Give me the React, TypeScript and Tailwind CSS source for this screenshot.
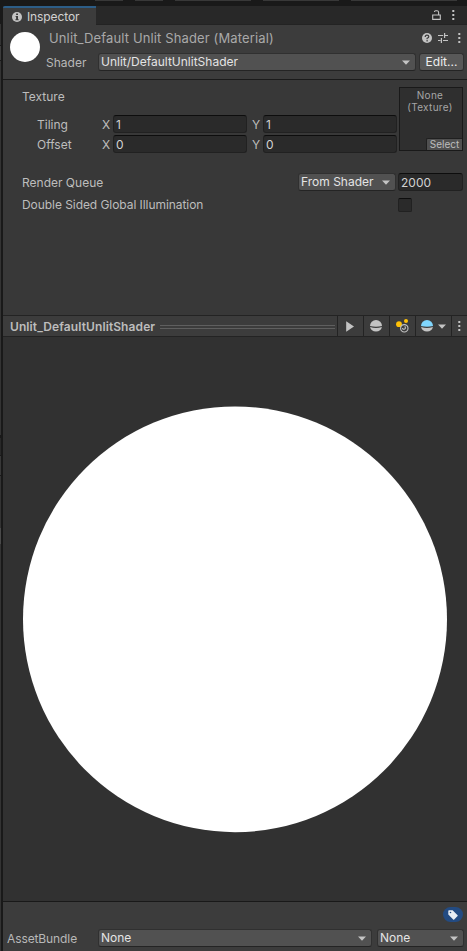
import type { ReactNode } from "react";

function Arrow() {
  return (
    <svg width="8" height="5" viewBox="0 0 8 5" className="shrink-0">
      <path d="M0 0.4H8L4 4.8Z" fill="#c4c4c4" />
    </svg>
  );
}

function Dots() {
  return (
    <svg width="3" height="10" viewBox="0 0 3 10" className="shrink-0">
      <path d="M0.3 0h2v2h-2zM0.3 4h2v2h-2zM0.3 8h2v2h-2z" fill="#c4c4c4" />
    </svg>
  );
}

function Popup({ children, className }: { children: ReactNode; className: string }) {
  return (
    <div
      className={`flex h-[18px] shrink-0 items-center justify-between rounded-[3px] border border-[#303030] border-b-[#242424] bg-[#515151] pr-[5px] pl-[2px] text-[#e4e4e4] ${className}`}
    >
      <span>{children}</span>
      <Arrow />
    </div>
  );
}

function Field({ children, className }: { children: ReactNode; className: string }) {
  return (
    <div
      className={`flex h-[18px] shrink-0 items-center rounded-[3px] border border-[#212121] border-t-[#0d0d0d] bg-[#2a2a2a] pt-[2px] pl-[2px] text-[#d2d2d2] ${className}`}
    >
      {children}
    </div>
  );
}

function VectorRow({ label, value }: { label: string; value: string }) {
  return (
    <div className="flex h-[18px] items-center">
      <span className="w-[65px] shrink-0 pt-[2px]">{label}</span>
      <span className="w-[11px] shrink-0 pt-[2px]">X</span>
      <Field className="w-[134px]">{value}</Field>
      <span className="ml-[5px] w-[11px] shrink-0 pt-[2px]">Y</span>
      <Field className="w-[134px]">{value}</Field>
    </div>
  );
}

function TopStrip() {
  return (
    <div className="flex h-[6px] bg-[#191919]">
      <div className="ml-[95px] h-px w-[28px] bg-[#383838]" />
      <div className="ml-[12px] h-px w-[28px] bg-[#383838]" />
      <div className="ml-[12px] h-px w-[76px] bg-[#383838]" />
      <div className="ml-[12px] h-px w-[76px] bg-[#383838]" />
      <div className="ml-[12px] h-px w-[106px] bg-[#383838]" />
    </div>
  );
}

function NeighbourEdge() {
  return (
    <div className="flex w-[3px] flex-col">
      <div className="mt-[18px] h-[21px] w-px bg-[#333333]" />
      <div className="mt-px h-[14px] w-px bg-[#3c3c3c]" />
      <div className="mt-px h-[374px] w-px bg-[#333333]" />
      <div className="mt-[3px] h-[17px] w-px bg-[#282828]" />
      <div className="mt-px h-[19px] w-px bg-[#383838]" />
      <div className="mt-px h-[52px] w-px bg-[#333333]" />
      <div className="h-[16px] w-px bg-[#4a4a4a]" />
      <div className="w-px flex-1 bg-[#333333]" />
    </div>
  );
}

function TabBar() {
  return (
    <div className="flex h-[19px] bg-[#282828]">
      <div className="flex w-[93px] items-center rounded-tl-[2px] border-t-2 border-[#2c5d87] bg-[#3c3c3c] pl-[9px] text-[#d2d2d2]">
        <svg width="10" height="10" viewBox="0 0 10 10">
          <circle cx="5" cy="5" r="5" fill="#c4c4c4" />
          <path d="M4.1 1.5h1.9v1.6H4.1zM3.6 4H6v3.3h.7v1H3.4v-1h.7V5h-.5z" fill="#3c3c3c" />
        </svg>
        <span className="ml-[5px] tracking-[-0.1px]">Inspector</span>
      </div>
      <div className="flex flex-1 items-center justify-end border-b border-[#232323] pr-[12px]">
        <svg width="9" height="10" viewBox="0 0 9 10" className="mr-[11px]">
          <path d="M0.7 5h7.6v4.4H0.7zM6.6 5V2.2Q6.6 .7 5 .7H3.6Q2.5 .7 2.4 2" fill="none" stroke="#c4c4c4" strokeWidth="1.1" />
        </svg>
        <Dots />
      </div>
    </div>
  );
}

function Header() {
  return (
    <div className="flex h-[55px] border-b border-[#1a1a1a] bg-[#3c3c3c]">
      <div className="mt-[7px] ml-[7px] h-[30px] w-[30px] shrink-0 rounded-full bg-white" />
      <div className="flex flex-1 flex-col">
        <div className="mt-[4px] flex h-[18px] items-center pr-[7px] pl-[9px]">
          <span className="flex-1 text-[13px] tracking-[0.13px] text-[#a9a9a9]">Unlit_Default Unlit Shader (Material)</span>
          <svg width="10" height="10" viewBox="0 0 10 10">
            <circle cx="5" cy="5" r="5" fill="#c4c4c4" />
            <path d="M3.2 3.9Q3.2 2.2 5 2.2T6.8 3.7Q6.8 4.6 5.1 5.3V6.3M5.1 7.1V8.4" fill="none" stroke="#3c3c3c" strokeWidth="1.2" />
          </svg>
          <svg width="10" height="10" viewBox="0 0 10 10" className="mr-[10px] ml-[6px]">
            <path d="M0 2.5h5.2M7 2.5h3M0 7.5h2.5M5 7.5h5M6.6 0v5M3.4 5v5" fill="none" stroke="#c4c4c4" strokeWidth="1.2" />
          </svg>
          <Dots />
        </div>
        <div className="mt-[6px] flex h-[18px] items-center pr-[4px] pl-[6px]">
          <span className="mt-[2px] w-[52px] text-[#b8b8b8]">Shader</span>
          <Popup className="w-[318px]">Unlit/DefaultUnlitShader</Popup>
          <div className="ml-[3px] flex h-[18px] w-[45px] items-center justify-center rounded-[3px] border border-[#303030] border-b-[#242424] bg-[#585858] text-[#eeeeee]">
            Edit...
          </div>
        </div>
      </div>
    </div>
  );
}

function Properties() {
  return (
    <div className="flex h-[235px] flex-col bg-[#383838] pr-[4px] pl-[19px] text-[#bdbdbd]">
      <div className="mt-[7px] flex h-[66px]">
        <div className="flex w-[377px] flex-col">
          <span className="mt-[1px] h-[18px] leading-[18px]">Texture</span>
          <div className="mt-[9px] flex flex-col gap-[2px] pl-[15px]">
            <VectorRow label="Tiling" value="1" />
            <VectorRow label="Offset" value="0" />
          </div>
        </div>
        <div className="flex h-[64px] w-[64px] shrink-0 flex-col justify-between border border-[#191919] bg-[#2f2f2f] text-[10px]">
          <div className="pt-[1px] pr-[2px] text-center leading-[12px] tracking-[0.3px] text-[#a6a6a6]">
            None
            <br />
            (Texture)
          </div>
          <div className="h-[12px] w-[36px] self-end rounded-tl-[2px] border-t border-l border-[#202020] bg-[#505050] text-center leading-[11px] text-[#bdbdbd]">
            Select
          </div>
        </div>
      </div>
      <div className="mt-[20px] flex h-[18px] items-center">
        <span className="flex-1 pt-[1px]">Render Queue</span>
        <Popup className="w-[98px]">From Shader</Popup>
        <Field className="ml-[2px] w-[65px]">2000</Field>
      </div>
      <div className="mt-[7px] flex h-[14px] items-center">
        <span className="w-[376px] tracking-[-0.06px]">Double Sided Global Illumination</span>
        <div className="h-[14px] w-[14px] rounded-[2px] border border-[#212121] border-t-[#0d0d0d] bg-[#2a2a2a]" />
      </div>
    </div>
  );
}

function Tool({ children, className }: { children: ReactNode; className: string }) {
  return <div className={`flex h-full shrink-0 items-center justify-center border-l border-[#232323] ${className}`}>{children}</div>;
}

function Ball({ top }: { top: string }) {
  return (
    <svg width="12" height="12" viewBox="0 0 12 12">
      <path d="M0 6A6 6 0 0 1 12 6Q6 7.6 0 6Z" fill={top} />
      <path d="M0.1 7.1Q6 8.9 11.9 7.1A6 5.4 0 0 1 .1 7.1Z" fill="#c4c4c4" />
    </svg>
  );
}

function PreviewBar() {
  return (
    <div className="flex h-[22px] items-center border-y border-[#232323] bg-[#3c3c3c]">
      <span className="ml-[7px] w-[150px] shrink-0 pt-[2px] font-semibold tracking-[0.1px] text-[#bdbdbd]">Unlit_DefaultUnlitShader</span>
      <div className="mt-[2px] mr-[2px] h-[4px] flex-1 border-y border-[#5f5f5f]" />
      <Tool className="w-[26px] pr-[1px]">
        <svg width="8" height="11" viewBox="0 0 8 11">
          <path d="M0.2 0.3L8 5.5L0.2 10.7Z" fill="#c4c4c4" />
        </svg>
      </Tool>
      <Tool className="w-[26px] pr-[1px]">
        <Ball top="#c4c4c4" />
      </Tool>
      <Tool className="w-[26px]">
        <svg width="13" height="14" viewBox="0 0 13 14">
          <circle cx="3" cy="5.2" r="2.9" fill="#ffc107" />
          <circle cx="10" cy="2" r="2" fill="#ffc107" />
          <circle cx="8.3" cy="9.3" r="3.7" fill="none" stroke="#c4c4c4" strokeWidth="1.1" />
          <path d="M8.8 7.2Q10.4 9.6 8 10.3Q6.5 10.3 6.6 9" fill="none" stroke="#c4c4c4" strokeWidth="1.1" />
        </svg>
      </Tool>
      <Tool className="w-[36px] gap-[5px]">
        <Ball top="#80d6fd" />
        <Arrow />
      </Tool>
      <Tool className="w-[16px]">
        <Dots />
      </Tool>
    </div>
  );
}

function Preview() {
  return (
    <div className="h-[564px] bg-[#313131]">
      <svg width="464" height="564" viewBox="0 0 464 564">
        <ellipse cx="232" cy="282.3" rx="212" ry="212.9" fill="#ffffff" />
      </svg>
    </div>
  );
}

function Footer() {
  return (
    <div className="flex flex-1 flex-col border-t border-[#191919] bg-[#3c3c3c] pr-[3px]">
      <div className="mt-[5px] mr-[1px] flex h-[15px] w-[20px] items-center justify-center self-end rounded-full bg-[#234b82]">
        <svg width="10" height="10" viewBox="0 0 10 10">
          <path d="M0.3 1Q.3 .3 1 .3H4.6L9.6 5.2Q10 5.7 9.6 6.1L6.2 9.5Q5.7 9.9 5.2 9.5L.3 4.5ZM2.5 1.7A.8.8 0 1 0 2.5 3.3A.8.8 0 1 0 2.5 1.7Z" fill="#e8edf3" fillRule="evenodd" />
        </svg>
      </div>
      <div className="mt-[7px] flex h-[18px] items-center">
        <span className="w-[95px] pt-[2px] pl-[4px] tracking-[-0.1px] text-[#b8b8b8]">AssetBundle</span>
        <Popup className="w-[274px]">None</Popup>
        <Popup className="ml-[5px] w-[87px]">None</Popup>
      </div>
    </div>
  );
}

export default function App() {
  return (
    <div className="flex h-[951px] w-[467px] flex-col overflow-hidden bg-[#191919] font-['Inter',sans-serif] text-[12px] leading-[16px] whitespace-nowrap">
      <TopStrip />
      <div className="flex flex-1">
        <NeighbourEdge />
        <div className="flex w-[464px] flex-col">
          <TabBar />
          <Header />
          <Properties />
          <PreviewBar />
          <Preview />
          <Footer />
        </div>
      </div>
    </div>
  );
}
